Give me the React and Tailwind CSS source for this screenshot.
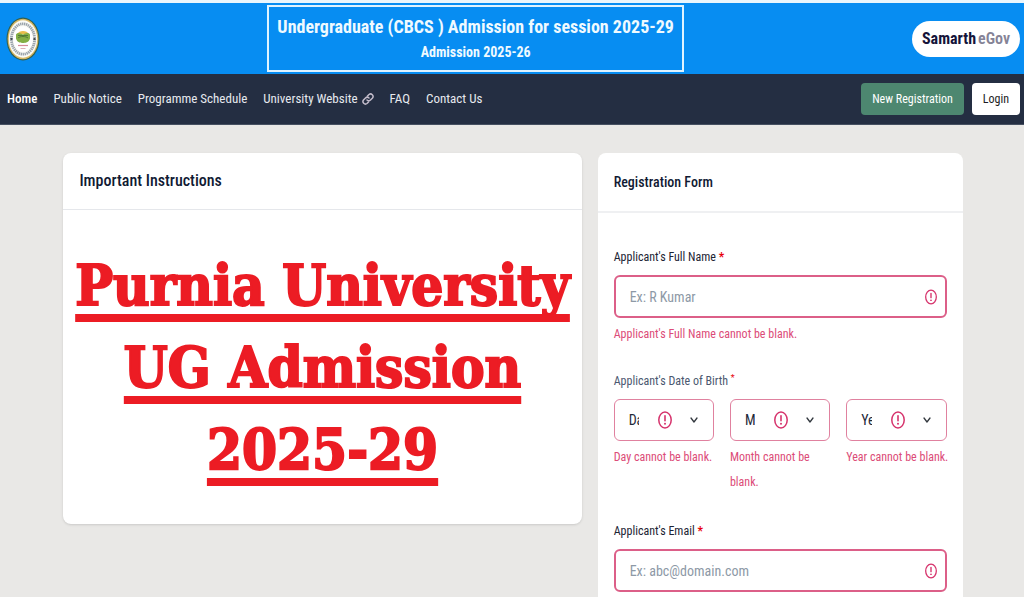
const NAV = ['Home', 'Public Notice', 'Programme Schedule', 'University Website', 'FAQ', 'Contact Us']

const DOB = [
  { id: 'dob-day', label: 'Day', error: 'Day cannot be blank.' },
  { id: 'dob-month', label: 'Month', error: 'Month cannot be blank.' },
  { id: 'dob-year', label: 'Year', error: 'Year cannot be blank.' },
]

// University seal
function Seal() {
  return (
    <svg viewBox="0 0 34 44" className="h-11 w-[34px]" role="img" aria-label="Purnia University">
      <ellipse cx="17" cy="22" rx="16.5" ry="21.5" fill="#33604f" />
      <ellipse cx="17" cy="22" rx="15.4" ry="20.2" fill="#d8b866" />
      <ellipse cx="17" cy="22" rx="14.2" ry="18.8" fill="#fbfbf6" />
      <ellipse cx="17" cy="22" rx="11.6" ry="15.2" fill="none" stroke="#9aa3ab" strokeWidth="2.8" strokeDasharray="1.4 .6" />
      <ellipse cx="17" cy="22" rx="9.6" ry="12.6" fill="#fff" />
      <path d="M4.5 22h2M27.5 22h2" stroke="#444b50" strokeWidth="2" />
      <path d="M11.5 17c1-4 10-4 11 0z" fill="#e8bd4c" />
      <path d="M10 17.5c2-3 5-1 7 0 2-1 5-3 7 0v4c-1 4-5 4.5-7 4.5s-6-.5-7-4.5z" fill="#84ae45" />
      <path d="M12 21c2-2 8-2 10 0M12 18.5h10" stroke="#517b35" fill="none" />
      <path d="M12 28.5h10" stroke="#d58b99" strokeWidth="1.2" />
      <path d="M14.5 31.5h5" stroke="#dfb0b5" />
    </svg>
  )
}

function LinkIcon() {
  return (
    <svg viewBox="0 0 24 24" className="h-3 w-3" fill="none" stroke="#c3bccb" strokeWidth="3" strokeLinecap="round" aria-hidden="true">
      <path d="M10 14a5 5 0 0 0 7 0l4-4a5 5 0 0 0-7-7l-3 3" />
      <path d="M14 10a5 5 0 0 0-7 0l-4 4a5 5 0 0 0 7 7l3-3" />
    </svg>
  )
}

function AlertIcon({ className }) {
  return (
    <svg viewBox="0 0 14 18" className={className} fill="none" stroke="#d6336c" aria-hidden="true">
      <ellipse cx="7" cy="9" rx="6.2" ry="8" strokeWidth="1.5" />
      <path d="M7 4.8v5" strokeWidth="1.6" strokeLinecap="round" />
      <circle cx="7" cy="12.8" r="1" fill="#d6336c" stroke="none" />
    </svg>
  )
}

function Chevron({ className }) {
  return (
    <svg viewBox="0 0 8 6" className={className} fill="none" stroke="#343a40" strokeWidth="1.3" strokeLinecap="round" strokeLinejoin="round" aria-hidden="true">
      <path d="M1 1l3 4 3-4" />
    </svg>
  )
}

function TextField({ id, label, placeholder, type = 'text', error }) {
  return (
    <div>
      <label htmlFor={id} className="block text-xs leading-5 text-[#1c2434]">
        {label} <span className="font-bold text-red-600">*</span>
      </label>
      <div className="relative mt-2">
        <input id={id} type={type} placeholder={placeholder}
          className="block h-[43px] w-full rounded-md border-2 border-[#dc5f88] bg-white pr-10 pl-3.5 text-sm text-gray-800 outline-none placeholder:text-[#8d99a6]" />
        <AlertIcon className="pointer-events-none absolute top-1/2 right-2.5 h-4 w-3 -translate-y-1/2" />
      </div>
      {error && <p className="mt-1 text-xs leading-[25px] text-[#dc4c78]">{error}</p>}
    </div>
  )
}

function DateSelect({ id, label, error }) {
  return (
    <div>
      <div className="relative">
        <select id={id} aria-label={label}
          className="block h-[42px] w-full appearance-none rounded-md border border-[#e0819f] bg-white pr-[74px] pl-3.5 text-sm text-gray-800 outline-none">
          <option>{label}</option>
        </select>
        <AlertIcon className="pointer-events-none absolute top-3 right-[42px] h-[18px] w-3.5" />
        <Chevron className="pointer-events-none absolute top-[18px] right-4 h-1.5 w-2" />
      </div>
      {/* runs a little into the gap so the short messages stay on one line */}
      <p className="mt-1 -mr-1 text-xs leading-[25px] text-[#dc4c78]">{error}</p>
    </div>
  )
}

export default function App() {
  return (
    <div className="flex min-h-screen flex-col border-t-[3px] border-[#eaf6fd] bg-[#e9e8e6] font-['Roboto_Condensed','Roboto',sans-serif]">
      <header className="grid grid-cols-[7fr_auto_9fr] items-center bg-[#078df2] pr-1 pl-1.5">
        <Seal />
        <div className="my-0.5 flex h-[67px] flex-col items-center border-2 border-[#dff3ff] px-2 pt-[7px] text-[#effaff]">
          <h1 className="text-lg leading-[26px] font-bold">Undergraduate (CBCS ) Admission for session 2025-29</h1>
          <p className="text-sm leading-6 font-bold">Admission 2025-26</p>
        </div>
        <a href="#" className="flex h-9 items-center gap-0.5 justify-self-end rounded-full bg-white px-2.5 text-base font-bold text-[#15143a]">
          Samarth<span className="font-semibold text-[#858396]">eGov</span>
        </a>
      </header>

      <nav className="flex h-[51px] items-center border-b border-[#465061] bg-[#242e42] pr-1 pl-[7px] text-[13px] text-[#e6e9ee]">
        <div className="flex flex-1 items-center gap-4">
          {NAV.map((item, i) => (
            <a key={item} href="#" className={i === 0 ? 'font-medium text-white' : 'flex items-center gap-1'}>
              {item}
              {item === 'University Website' && <LinkIcon />}
            </a>
          ))}
        </div>
        <div className="flex gap-2">
          <button className="h-8 rounded bg-[#4d8770] px-[11px] text-xs text-white">New Registration</button>
          <button className="h-8 rounded bg-white px-[11px] text-xs text-[#1b1b22]">Login</button>
        </div>
      </nav>

      <main className="mx-auto grid w-[88%] flex-1 grid-cols-[1.42fr_1fr] gap-4 pt-7 pl-0.5">
        <section className="self-start rounded-lg bg-white shadow-sm">
          <h2 className="border-b border-[#e5e7eb] px-4 py-4 text-base leading-6 font-medium text-[#101a33]">Important Instructions</h2>
          <p className="py-[34px] text-center font-['DejaVu_Serif_Condensed','DejaVu_Serif',serif] text-[56px] leading-[82px] font-bold text-[#ec1c24] underline decoration-8 underline-offset-9 [-webkit-text-stroke:2px_#ec1c24] [text-decoration-skip-ink:none]">
            Purnia University<br />UG Admission<br />2025-29
          </p>
        </section>

        <section className="rounded-t-lg bg-white">
          <h2 className="border-b-2 border-[#eff0f2] px-4 py-[18px] text-sm leading-[22px] font-medium text-[#101a33]">Registration Form</h2>
          <form className="px-4 pt-[34px] pb-1">
            <TextField id="name" label="Applicant's Full Name" placeholder="Ex: R Kumar" error="Applicant's Full Name cannot be blank." />
            <fieldset className="mt-6">
              <legend className="text-xs leading-5 text-[#4b5870]">
                Applicant's Date of Birth <sup className="text-red-600">*</sup>
              </legend>
              <div className="mt-2 grid grid-cols-3 gap-4">
                {DOB.map(d => <DateSelect key={d.id} {...d} />)}
              </div>
            </fieldset>
            <div className="mt-[26px]">
              <TextField id="email" type="email" label="Applicant's Email" placeholder="Ex: abc@domain.com" />
            </div>
          </form>
        </section>
      </main>
    </div>
  )
}
